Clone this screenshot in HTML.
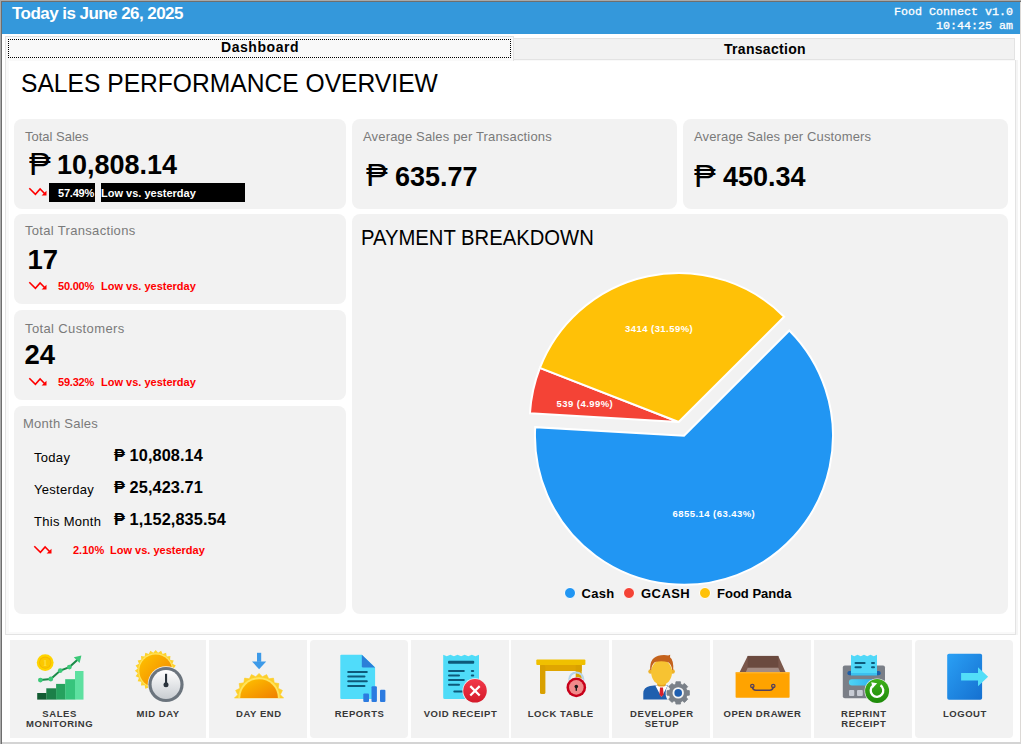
<!DOCTYPE html>
<html><head><meta charset="utf-8"><style>
html,body{margin:0;padding:0;width:1021px;height:744px;overflow:hidden;background:#fff;}
.r{position:absolute;box-sizing:border-box;}
.t{position:absolute;white-space:nowrap;line-height:1;}
</style></head><body>
<div class="r" style="left:0px;top:0px;width:1021px;height:744px;background:#ffffff;"></div>
<div class="r" style="left:0;top:0;width:1021px;height:1px;background:#a9a9a9"></div>
<div class="r" style="left:0;top:0;width:1px;height:744px;background:#a9a9a9"></div>
<div class="r" style="left:1px;top:1px;width:1020px;height:1px;background:#6e6e6e"></div>
<div class="r" style="left:1px;top:1px;width:1px;height:743px;background:#6e6e6e"></div>
<div class="r" style="left:1020px;top:2px;width:1px;height:742px;background:#dcd9d6;"></div>
<div class="r" style="left:2px;top:742px;width:1019px;height:2px;background:#d4d4d4;"></div>
<div class="r" style="left:2px;top:2px;width:1018px;height:32px;background:#3498db;"></div>
<div class="t" style="left:12px;top:4.55px;font-size:17px;font-weight:bold;color:#fff;font-family:'Liberation Sans', sans-serif;letter-spacing:-0.55px;">Today is June 26, 2025</div>
<div class="t" style="left:894px;top:7.13px;font-size:11.67px;font-weight:normal;color:#fff;font-family:'Liberation Mono', monospace;letter-spacing:0px;-webkit-text-stroke:0.3px #fff;">Food Connect v1.0</div>
<div class="t" style="left:936px;top:21.43px;font-size:11.67px;font-weight:normal;color:#fff;font-family:'Liberation Mono', monospace;letter-spacing:0px;-webkit-text-stroke:0.3px #fff;">10:44:25 am</div>
<div class="r" style="left:5px;top:60px;width:1011px;height:575px;background:#e3e3e3;"></div>
<div class="r" style="left:6px;top:60px;width:1009px;height:574px;background:#f9f9f9;"></div>
<div class="r" style="left:9px;top:61px;width:1006px;height:571px;background:#ffffff;"></div>
<div class="r" style="left:1016px;top:60px;width:2px;height:575px;background:#f5f5f5;"></div>
<div class="r" style="left:513px;top:38px;width:502px;height:22px;background:#e3e3e3;"></div>
<div class="r" style="left:514px;top:39px;width:500px;height:20px;background:#f2f2f2;"></div>
<div class="r" style="left:514px;top:60px;width:501px;height:1px;background:#f9f9f9;"></div>
<div class="r" style="left:5px;top:36px;width:509px;height:25px;background:#e3e3e3;"></div>
<div class="r" style="left:6px;top:37px;width:507px;height:24px;background:#f9f9f9;"></div>
<div class="r" style="left:8px;top:39px;width:503px;height:19px;border:1px dotted #000;"></div>
<div class="t" style="left:221px;top:39.80px;font-size:14px;font-weight:bold;color:#000;font-family:'Liberation Sans', sans-serif;letter-spacing:0.55px;">Dashboard</div>
<div class="t" style="left:724px;top:42.10px;font-size:14px;font-weight:bold;color:#000;font-family:'Liberation Sans', sans-serif;letter-spacing:0.3px;">Transaction</div>
<div class="t" style="left:21px;top:69.97px;font-size:26.5px;font-weight:normal;color:#000;font-family:'Liberation Sans', sans-serif;letter-spacing:0px;transform:scaleX(0.929);transform-origin:0 0;">SALES PERFORMANCE OVERVIEW</div>
<div class="r" style="left:14px;top:119px;width:332px;height:90px;background:#f2f2f2;border-radius:8px"></div>
<div class="r" style="left:14px;top:214px;width:332px;height:90px;background:#f2f2f2;border-radius:8px"></div>
<div class="r" style="left:14px;top:310px;width:332px;height:90px;background:#f2f2f2;border-radius:8px"></div>
<div class="r" style="left:14px;top:406px;width:332px;height:208px;background:#f2f2f2;border-radius:8px"></div>
<div class="r" style="left:352px;top:119px;width:325px;height:90px;background:#f2f2f2;border-radius:8px"></div>
<div class="r" style="left:683px;top:119px;width:325px;height:90px;background:#f2f2f2;border-radius:8px"></div>
<div class="r" style="left:352px;top:214px;width:656px;height:400px;background:#f2f2f2;border-radius:8px"></div>
<div class="t" style="left:25px;top:129.95px;font-size:13px;font-weight:normal;color:#7a7a7a;font-family:'Liberation Sans', sans-serif;letter-spacing:0px;">Total Sales</div>
<div class="t" style="left:28.5px;top:149.15px;font-size:31px;font-weight:normal;color:#000;font-family:'Liberation Sans', sans-serif;letter-spacing:0px;transform:scaleX(1.05);transform-origin:0 0;">&#8369;</div>
<div class="t" style="left:57px;top:151.55px;font-size:27px;font-weight:bold;color:#000;font-family:'Liberation Sans', sans-serif;letter-spacing:0px;">10,808.14</div>
<svg class="r" style="left:27px;top:186px" width="22" height="12" viewBox="0 0 22 12"><polyline points="2.3,2.3 8.4,8.4 13.1,3 18.3,8.2" fill="none" stroke="#ff0000" stroke-width="1.6"/><polygon points="19.5,9.5 19.5,4.8 14.6,9.5" fill="#ff0000"/></svg>
<div class="r" style="left:49px;top:183px;width:46px;height:19px;background:#000;"></div>
<div class="r" style="left:101px;top:183px;width:144px;height:19px;background:#000;"></div>
<div class="t" style="left:58px;top:187.65px;font-size:11px;font-weight:bold;color:#fff;font-family:'Liberation Sans', sans-serif;letter-spacing:-0.2px;">57.49%</div>
<div class="t" style="left:101px;top:187.65px;font-size:11px;font-weight:bold;color:#fff;font-family:'Liberation Sans', sans-serif;letter-spacing:0px;">Low vs. yesterday</div>
<div class="t" style="left:25px;top:223.95px;font-size:13px;font-weight:normal;color:#7a7a7a;font-family:'Liberation Sans', sans-serif;letter-spacing:0.32px;">Total Transactions</div>
<div class="t" style="left:27.5px;top:245.62px;font-size:27.5px;font-weight:bold;color:#000;font-family:'Liberation Sans', sans-serif;letter-spacing:0px;">17</div>
<svg class="r" style="left:27px;top:280px" width="22" height="12" viewBox="0 0 22 12"><polyline points="2.3,2.3 8.4,8.4 13.1,3 18.3,8.2" fill="none" stroke="#ff0000" stroke-width="1.6"/><polygon points="19.5,9.5 19.5,4.8 14.6,9.5" fill="#ff0000"/></svg>
<div class="t" style="left:58px;top:280.65px;font-size:11px;font-weight:bold;color:#ff0000;font-family:'Liberation Sans', sans-serif;letter-spacing:-0.2px;">50.00%</div>
<div class="t" style="left:101px;top:280.65px;font-size:11px;font-weight:bold;color:#ff0000;font-family:'Liberation Sans', sans-serif;letter-spacing:0px;">Low vs. yesterday</div>
<div class="t" style="left:25px;top:321.95px;font-size:13px;font-weight:normal;color:#7a7a7a;font-family:'Liberation Sans', sans-serif;letter-spacing:0.38px;">Total Customers</div>
<div class="t" style="left:24.5px;top:340.62px;font-size:27.5px;font-weight:bold;color:#000;font-family:'Liberation Sans', sans-serif;letter-spacing:0px;">24</div>
<svg class="r" style="left:27px;top:376px" width="22" height="12" viewBox="0 0 22 12"><polyline points="2.3,2.3 8.4,8.4 13.1,3 18.3,8.2" fill="none" stroke="#ff0000" stroke-width="1.6"/><polygon points="19.5,9.5 19.5,4.8 14.6,9.5" fill="#ff0000"/></svg>
<div class="t" style="left:58px;top:376.65px;font-size:11px;font-weight:bold;color:#ff0000;font-family:'Liberation Sans', sans-serif;letter-spacing:-0.2px;">59.32%</div>
<div class="t" style="left:101px;top:376.65px;font-size:11px;font-weight:bold;color:#ff0000;font-family:'Liberation Sans', sans-serif;letter-spacing:0px;">Low vs. yesterday</div>
<div class="t" style="left:23px;top:416.95px;font-size:13px;font-weight:normal;color:#7a7a7a;font-family:'Liberation Sans', sans-serif;letter-spacing:0.25px;">Month Sales</div>
<div class="t" style="left:34px;top:451.15px;font-size:13px;font-weight:normal;color:#000;font-family:'Liberation Sans', sans-serif;letter-spacing:0.3px;">Today</div>
<div class="t" style="left:34px;top:482.95px;font-size:13px;font-weight:normal;color:#000;font-family:'Liberation Sans', sans-serif;letter-spacing:0.3px;">Yesterday</div>
<div class="t" style="left:34px;top:514.75px;font-size:13px;font-weight:normal;color:#000;font-family:'Liberation Sans', sans-serif;letter-spacing:0.3px;">This Month</div>
<div class="t" style="left:114px;top:446.64px;font-size:16.3px;font-weight:bold;color:#000;font-family:'Liberation Sans', sans-serif;letter-spacing:0.1px;">&#8369; 10,808.14</div>
<div class="t" style="left:114px;top:479.25px;font-size:16.3px;font-weight:bold;color:#000;font-family:'Liberation Sans', sans-serif;letter-spacing:0.1px;">&#8369; 25,423.71</div>
<div class="t" style="left:114px;top:511.14px;font-size:16.3px;font-weight:bold;color:#000;font-family:'Liberation Sans', sans-serif;letter-spacing:0.1px;">&#8369; 1,152,835.54</div>
<svg class="r" style="left:32px;top:544px" width="22" height="12" viewBox="0 0 22 12"><polyline points="2.3,2.3 8.4,8.4 13.1,3 18.3,8.2" fill="none" stroke="#ff0000" stroke-width="1.6"/><polygon points="19.5,9.5 19.5,4.8 14.6,9.5" fill="#ff0000"/></svg>
<div class="t" style="left:73px;top:545.35px;font-size:11px;font-weight:bold;color:#ff0000;font-family:'Liberation Sans', sans-serif;letter-spacing:0px;">2.10%</div>
<div class="t" style="left:110px;top:545.15px;font-size:11px;font-weight:bold;color:#ff0000;font-family:'Liberation Sans', sans-serif;letter-spacing:0px;">Low vs. yesterday</div>
<div class="t" style="left:363px;top:129.95px;font-size:13px;font-weight:normal;color:#7a7a7a;font-family:'Liberation Sans', sans-serif;letter-spacing:0.16px;">Average Sales per Transactions</div>
<div class="t" style="left:366px;top:160.15px;font-size:31px;font-weight:normal;color:#000;font-family:'Liberation Sans', sans-serif;letter-spacing:0px;transform:scaleX(1.05);transform-origin:0 0;">&#8369;</div>
<div class="t" style="left:395px;top:163.55px;font-size:27px;font-weight:bold;color:#000;font-family:'Liberation Sans', sans-serif;letter-spacing:0px;">635.77</div>
<div class="t" style="left:694px;top:129.95px;font-size:13px;font-weight:normal;color:#7a7a7a;font-family:'Liberation Sans', sans-serif;letter-spacing:0.15px;">Average Sales per Customers</div>
<div class="t" style="left:694px;top:160.95px;font-size:31px;font-weight:normal;color:#000;font-family:'Liberation Sans', sans-serif;letter-spacing:0px;transform:scaleX(1.05);transform-origin:0 0;">&#8369;</div>
<div class="t" style="left:723px;top:164.35px;font-size:27px;font-weight:bold;color:#000;font-family:'Liberation Sans', sans-serif;letter-spacing:0px;">450.34</div>
<div class="t" style="left:361px;top:226.50px;font-size:22px;font-weight:normal;color:#000;font-family:'Liberation Sans', sans-serif;letter-spacing:0px;transform:scaleX(0.92);transform-origin:0 0;">PAYMENT BREAKDOWN</div>
<svg class="r" style="left:0;top:0" width="1021" height="744"><path d="M683.96,435.83 L789.32,330.47 A149.0,149.0 0 1 1 535.22,427.13 Z" fill="#2196f3" stroke="#fff" stroke-width="2" stroke-linejoin="miter"/><path d="M678.70,422.00 L529.95,413.30 A149.0,149.0 0 0 1 539.89,367.85 Z" fill="#f44336" stroke="#fff" stroke-width="2" stroke-linejoin="miter"/><path d="M678.70,422.00 L539.89,367.85 A149.0,149.0 0 0 1 784.13,316.71 Z" fill="#ffc107" stroke="#fff" stroke-width="2" stroke-linejoin="miter"/></svg>
<div class="t" style="left:625px;top:324.43px;font-size:9.5px;font-weight:bold;color:#fff;font-family:'Liberation Sans', sans-serif;letter-spacing:0.45px;">3414 (31.59%)</div>
<div class="t" style="left:556.5px;top:398.53px;font-size:9.5px;font-weight:bold;color:#fff;font-family:'Liberation Sans', sans-serif;letter-spacing:0.45px;">539 (4.99%)</div>
<div class="t" style="left:672.5px;top:508.93px;font-size:9.5px;font-weight:bold;color:#fff;font-family:'Liberation Sans', sans-serif;letter-spacing:0.45px;">6855.14 (63.43%)</div>
<div class="r" style="left:564px;top:587.4px;width:12px;height:12px;border-radius:50%;background:#2196f3;border:1px solid #fff"></div>
<div class="t" style="left:581.5px;top:586.95px;font-size:13px;font-weight:bold;color:#000;font-family:'Liberation Sans', sans-serif;letter-spacing:0.3px;">Cash</div>
<div class="r" style="left:623.3px;top:587.4px;width:12px;height:12px;border-radius:50%;background:#f44336;border:1px solid #fff"></div>
<div class="t" style="left:641px;top:586.95px;font-size:13px;font-weight:bold;color:#000;font-family:'Liberation Sans', sans-serif;letter-spacing:0.45px;">GCASH</div>
<div class="r" style="left:699px;top:587.4px;width:12px;height:12px;border-radius:50%;background:#ffc107;border:1px solid #fff"></div>
<div class="t" style="left:717px;top:586.95px;font-size:13px;font-weight:bold;color:#000;font-family:'Liberation Sans', sans-serif;letter-spacing:0px;">Food Panda</div>
<div class="r" style="left:10px;top:640px;width:196px;height:98px;background:#f2f2f2;"></div>
<div class="r" style="left:209px;top:640px;width:98px;height:98px;background:#f2f2f2;"></div>
<div class="r" style="left:310px;top:640px;width:98px;height:98px;background:#f2f2f2;border-radius:4px"></div>
<div class="r" style="left:411px;top:640px;width:98px;height:98px;background:#f2f2f2;"></div>
<div class="r" style="left:511px;top:640px;width:98px;height:98px;background:#f2f2f2;"></div>
<div class="r" style="left:612px;top:640px;width:98px;height:98px;background:#f2f2f2;"></div>
<div class="r" style="left:713px;top:640px;width:98px;height:98px;background:#f2f2f2;"></div>
<div class="r" style="left:814px;top:640px;width:98px;height:98px;background:#f2f2f2;"></div>
<div class="r" style="left:915px;top:640px;width:98px;height:98px;background:#f2f2f2;border-radius:4px"></div>
<div class="t" style="left:-0.43px;width:120px;text-align:center;top:709.42px;font-size:9.5px;font-weight:bold;color:#383838;font-family:'Liberation Sans', sans-serif;letter-spacing:0.55px">SALES</div>
<div class="t" style="left:-0.43px;width:120px;text-align:center;top:719.12px;font-size:9.5px;font-weight:bold;color:#383838;font-family:'Liberation Sans', sans-serif;letter-spacing:0.55px">MONITORING</div>
<div class="t" style="left:98.08px;width:120px;text-align:center;top:709.42px;font-size:9.5px;font-weight:bold;color:#383838;font-family:'Liberation Sans', sans-serif;letter-spacing:0.55px">MID DAY</div>
<div class="t" style="left:198.88px;width:120px;text-align:center;top:709.42px;font-size:9.5px;font-weight:bold;color:#383838;font-family:'Liberation Sans', sans-serif;letter-spacing:0.55px">DAY END</div>
<div class="t" style="left:299.57px;width:120px;text-align:center;top:709.42px;font-size:9.5px;font-weight:bold;color:#383838;font-family:'Liberation Sans', sans-serif;letter-spacing:0.55px">REPORTS</div>
<div class="t" style="left:400.47px;width:120px;text-align:center;top:709.42px;font-size:9.5px;font-weight:bold;color:#383838;font-family:'Liberation Sans', sans-serif;letter-spacing:0.55px">VOID RECEIPT</div>
<div class="t" style="left:500.77px;width:120px;text-align:center;top:709.42px;font-size:9.5px;font-weight:bold;color:#383838;font-family:'Liberation Sans', sans-serif;letter-spacing:0.55px">LOCK TABLE</div>
<div class="t" style="left:601.88px;width:120px;text-align:center;top:709.42px;font-size:9.5px;font-weight:bold;color:#383838;font-family:'Liberation Sans', sans-serif;letter-spacing:0.55px">DEVELOPER</div>
<div class="t" style="left:601.88px;width:120px;text-align:center;top:719.12px;font-size:9.5px;font-weight:bold;color:#383838;font-family:'Liberation Sans', sans-serif;letter-spacing:0.55px">SETUP</div>
<div class="t" style="left:702.48px;width:120px;text-align:center;top:709.42px;font-size:9.5px;font-weight:bold;color:#383838;font-family:'Liberation Sans', sans-serif;letter-spacing:0.55px">OPEN DRAWER</div>
<div class="t" style="left:803.77px;width:120px;text-align:center;top:709.42px;font-size:9.5px;font-weight:bold;color:#383838;font-family:'Liberation Sans', sans-serif;letter-spacing:0.55px">REPRINT</div>
<div class="t" style="left:803.77px;width:120px;text-align:center;top:719.12px;font-size:9.5px;font-weight:bold;color:#383838;font-family:'Liberation Sans', sans-serif;letter-spacing:0.55px">RECEIPT</div>
<div class="t" style="left:904.88px;width:120px;text-align:center;top:709.42px;font-size:9.5px;font-weight:bold;color:#383838;font-family:'Liberation Sans', sans-serif;letter-spacing:0.55px">LOGOUT</div>
<svg class="r" style="left:0;top:0" width="1021" height="744"><defs>
<linearGradient id="sunG" x1="0" y1="0" x2="1" y2="1"><stop offset="0" stop-color="#ffc400"/><stop offset="1" stop-color="#f08000"/></linearGradient>
<linearGradient id="faceG" x1="0" y1="0" x2="0" y2="1"><stop offset="0" stop-color="#ffffff"/><stop offset="1" stop-color="#c9cdd2"/></linearGradient>
<linearGradient id="redG" x1="0" y1="0" x2="0" y2="1"><stop offset="0" stop-color="#f2394a"/><stop offset="1" stop-color="#d41a2a"/></linearGradient>
<linearGradient id="greenG" x1="0" y1="0" x2="0" y2="1"><stop offset="0" stop-color="#3fb01a"/><stop offset="1" stop-color="#1e8a0a"/></linearGradient>
<linearGradient id="doorG" x1="0" y1="0" x2="1" y2="1"><stop offset="0" stop-color="#2aa0f5"/><stop offset="1" stop-color="#1570d0"/></linearGradient>
<linearGradient id="dispG" x1="0" y1="0" x2="1" y2="0"><stop offset="0" stop-color="#4fd4f5"/><stop offset="1" stop-color="#2ab0ee"/></linearGradient>
</defs>
<rect x="37.20" y="693.0" width="9.30" height="6.60" fill="#135c33"/>
<rect x="46.30" y="688.3" width="10.00" height="11.30" fill="#1c8048"/>
<rect x="56.10" y="683.9" width="9.30" height="15.70" fill="#26a25e"/>
<rect x="65.20" y="679.2" width="10.00" height="20.40" fill="#37c47c"/>
<rect x="75.00" y="671.0" width="8.50" height="28.60" fill="#5ee0a0"/>
<polyline points="40.4,680.1 50.8,679 60.3,670.6 69.4,667.1 77.5,659.8" fill="none" stroke="#1b8a48" stroke-width="2"/>
<circle cx="40.4" cy="680.1" r="2.4" fill="#3cc878"/>
<circle cx="50.8" cy="679" r="2.4" fill="#3cc878"/>
<circle cx="60.3" cy="670.6" r="2.4" fill="#3cc878"/>
<circle cx="69.4" cy="667.1" r="2.4" fill="#3cc878"/>
<polygon points="81.4,655.6 73.8,657.3 79.6,663.1" fill="#3cc878"/>
<circle cx="45.2" cy="662.6" r="8.4" fill="#ffd400"/>
<circle cx="45.2" cy="662.6" r="6.2" fill="#f5b800"/>
<circle cx="45.2" cy="662.6" r="5.2" fill="#fcc800"/>
<text x="45.2" y="665.8" font-family="Liberation Serif" font-weight="bold" font-size="8.5" fill="#ffe040" text-anchor="middle">1</text>
<polygon points="176.50,670.80 173.65,673.16 175.79,676.18 172.42,677.73 173.71,681.20 170.06,681.82 170.41,685.51 166.72,685.16 166.10,688.81 162.63,687.52 161.08,690.89 158.06,688.75 155.70,691.60 153.34,688.75 150.32,690.89 148.77,687.52 145.30,688.81 144.68,685.16 140.99,685.51 141.34,681.82 137.69,681.20 138.98,677.73 135.61,676.18 137.75,673.16 134.90,670.80 137.75,668.44 135.61,665.42 138.98,663.87 137.69,660.40 141.34,659.78 140.99,656.09 144.68,656.44 145.30,652.79 148.77,654.08 150.32,650.71 153.34,652.85 155.70,650.00 158.06,652.85 161.08,650.71 162.63,654.08 166.10,652.79 166.72,656.44 170.41,656.09 170.06,659.78 173.71,660.40 172.42,663.87 175.79,665.42 173.65,668.44" fill="#fdd22e"/>
<circle cx="155.7" cy="670.8" r="17.6" fill="#ffe45c"/>
<circle cx="155.7" cy="670.8" r="16.4" fill="url(#sunG)"/>
<circle cx="166" cy="684.5" r="18.3" fill="#f2f2f2"/>
<circle cx="166" cy="684.5" r="17.6" fill="#6b747d"/>
<circle cx="166" cy="684.5" r="14.4" fill="url(#faceG)"/>
<rect x="165" y="673.8" width="2.1" height="10.5" fill="#2a333c"/>
<circle cx="166" cy="684.7" r="2.5" fill="#2a333c"/>
<rect x="257" y="652.8" width="4.2" height="9" fill="#3d9ae8"/>
<polygon points="252,661.4 266.2,661.4 259.1,669.3" fill="#3d9ae8"/>
<polygon points="234.45,698.00 237.81,694.64 235.65,690.40 239.89,688.24 239.15,683.54 243.85,682.80 244.59,678.10 249.29,678.84 251.45,674.60 255.69,676.76 259.05,673.40 262.41,676.76 266.65,674.60 268.81,678.84 273.51,678.10 274.25,682.80 278.95,683.54 278.21,688.24 282.45,690.40 280.29,694.64 283.65,698.00" fill="#fdcf2a" stroke="#fdcf2a" stroke-width="0.6" stroke-linejoin="round"/>
<path d="M238.3,698 A20.75,20.75 0 0 1 279.8,698 Z" fill="#ffe45c"/>
<path d="M240.2,698 A18.85,18.85 0 0 1 277.9,698 Z" fill="url(#sunG)"/>
<path d="M341.3,654.7 L361.8,654.7 L375.1,667.4 L375.1,697.9 Q375.1,698.9 374.1,698.9 L341.3,698.9 Q340.3,698.9 340.3,697.9 L340.3,655.7 Q340.3,654.7 341.3,654.7 Z" fill="#50dcfa"/>
<path d="M361.8,654.7 L375.1,667.4 L363,667.4 Q361.8,667.4 361.8,666.2 Z" fill="#2b7fd8"/>
<rect x="347.2" y="670.9" width="20.6" height="2" rx="1" fill="#0d5a7a"/>
<rect x="347.2" y="675.6" width="18.3" height="2" rx="1" fill="#0d5a7a"/>
<rect x="347.2" y="680.3" width="20.6" height="2" rx="1" fill="#0d5a7a"/>
<rect x="347.2" y="685.0" width="18.3" height="2" rx="1" fill="#0d5a7a"/>
<rect x="363.3" y="693.4" width="5.7" height="8.5" rx="1" fill="#2c7be0"/>
<rect x="371.5" y="686.2" width="5.4" height="15.7" rx="1" fill="#2c7be0"/>
<rect x="380" y="689.8" width="5.4" height="12.1" rx="1" fill="#2c7be0"/>
<path d="M444.7,698.9 Q443.2,698.9 443.2,697.4 L443.2,654.7 L443.20,654.7 L446.78,656.2 L450.36,654.7 L453.94,656.2 L457.52,654.7 L461.10,656.2 L464.68,654.7 L468.26,656.2 L471.84,654.7 L475.42,656.2 L479.00,654.7 L479,697.4 Q479,698.9 477.5,698.9 Z" fill="#4fdcf8"/>
<rect x="448" y="660.8" width="26.2" height="3" rx="1" fill="#0d5a7a"/>
<rect x="448" y="670" width="16.8" height="2" rx="1" fill="#0d5a7a"/>
<rect x="448" y="674.5" width="12.0" height="2" rx="1" fill="#0d5a7a"/>
<rect x="448" y="679" width="16.8" height="2" rx="1" fill="#0d5a7a"/>
<rect x="448" y="683.7" width="12.0" height="2" rx="1" fill="#0d5a7a"/>
<rect x="470.8" y="670" width="3.4" height="2" rx="1" fill="#0d5a7a"/>
<rect x="470.8" y="674.5" width="3.4" height="2" rx="1" fill="#0d5a7a"/>
<rect x="453.3" y="690.6" width="11.7" height="2" rx="1" fill="#0d5a7a"/>
<circle cx="475" cy="690.8" r="12.6" fill="#f2f2f2"/>
<circle cx="475" cy="690.8" r="11.8" fill="url(#redG)"/>
<path d="M470.3,686.1 L479.7,695.5 M479.7,686.1 L470.3,695.5" stroke="#fff" stroke-width="2.2"/>
<rect x="540" y="665" width="41.7" height="6" fill="#e0a500"/>
<rect x="540" y="665" width="5.4" height="29" rx="1.5" fill="#d9a000"/>
<rect x="575.7" y="665" width="6" height="16" fill="#d9a000"/>
<rect x="536.3" y="659.5" width="49.1" height="5.5" rx="1" fill="#f0c000"/>
<circle cx="576.3" cy="679.5" r="7" fill="none" stroke="#b7d4ea" stroke-width="2.2"/>
<circle cx="576.3" cy="687.4" r="10.5" fill="#f2f2f2"/>
<circle cx="576.3" cy="687.4" r="9.8" fill="#c8001a"/>
<circle cx="576.3" cy="687.4" r="7.3" fill="#f08a8a"/>
<circle cx="576.3" cy="686.6" r="1.8" fill="#1a1a1a"/>
<rect x="575.6" y="686.6" width="1.4" height="4.2" fill="#1a1a1a"/>
<path d="M643.3,699.6 L643.3,693.5 Q643.3,687.2 650,686 L656,685.2 L661.5,686.5 L667,685.2 L673,686 Q679,687.2 679,693.5 L679,699.6 Z" fill="#1f5fae"/>
<path d="M655.3,685.5 L661.5,697.2 L667.7,685.5 Z" fill="#ffffff"/>
<polygon points="660,687.5 663,687.5 663.6,694.5 661.5,697 659.4,694.5" fill="#d8202a"/>
<rect x="657.2" y="679" width="8.6" height="7.5" rx="2" fill="#e4a01c"/>
<circle cx="650.6" cy="671.5" r="2.3" fill="#eeb22a"/>
<circle cx="672.6" cy="671.5" r="2.3" fill="#eeb22a"/>
<ellipse cx="661.6" cy="672.3" rx="10.4" ry="12.6" fill="#f7c332"/>
<path d="M650.2,670 Q649.3,656.5 661,655.2 Q666,654.8 668.2,655.6 L670.2,654.7 L670,657.2 Q673.8,660 673.2,670 L672.2,670 Q671.6,664.5 668.2,662.2 Q661.6,660.4 655,662 Q651.6,664.4 651.2,670 Z" fill="#c4621c"/>
<circle cx="678.2" cy="692.9" r="12.6" fill="#f2f2f2"/>
<polygon points="675.60,684.49 675.94,681.73 680.46,681.73 680.80,684.49 682.31,685.12 684.50,683.40 687.70,686.60 685.98,688.79 686.61,690.30 689.37,690.64 689.37,695.16 686.61,695.50 685.98,697.01 687.70,699.20 684.50,702.40 682.31,700.68 680.80,701.31 680.46,704.07 675.94,704.07 675.60,701.31 674.09,700.68 671.90,702.40 668.70,699.20 670.42,697.01 669.79,695.50 667.03,695.16 667.03,690.64 669.79,690.30 670.42,688.79 668.70,686.60 671.90,683.40 674.09,685.12" fill="#7a8088" stroke="#7a8088" stroke-width="0.8" stroke-linejoin="round"/>
<circle cx="678.2" cy="692.9" r="9.2" fill="#7a8088"/>
<circle cx="678.2" cy="692.9" r="5.7" fill="#f4f4f4"/>
<circle cx="678.2" cy="692.9" r="3.8" fill="#1f5fb0"/>
<polygon points="747.7,655.9 778.3,655.9 785.6,672.2 739.6,672.2" fill="#7a574b"/>
<rect x="747.7" y="655.9" width="30.6" height="11.8" fill="#6b4a3f"/>
<polygon points="747.7,667.7 778.3,667.7 780.2,672.2 745.8,672.2" fill="#a48c84"/>
<rect x="735.6" y="672.2" width="54" height="25.5" rx="0.8" fill="#ffa300"/>
<rect x="735.6" y="672.2" width="54" height="1.2" fill="#ffb52e"/>
<path d="M752.3,686.6 Q752.8,690.3 756,690.3 L769.6,690.3 Q772.8,690.3 773.3,686.6" fill="none" stroke="#55405a" stroke-width="1.6"/>
<circle cx="752.3" cy="686" r="1.7" fill="none" stroke="#55405a" stroke-width="1.3"/>
<circle cx="773.3" cy="686" r="1.7" fill="none" stroke="#55405a" stroke-width="1.3"/>
<rect x="842.8" y="665.6" width="42.2" height="32.7" rx="2" fill="#7b7f87"/>
<rect x="847.4" y="671" width="33.3" height="4.3" rx="2.1" fill="#1d5ea8"/>
<path d="M851,675.3 L851,654.7 L851.00,654.7 L854.25,656.2 L857.50,654.7 L860.75,656.2 L864.00,654.7 L867.25,656.2 L870.50,654.7 L873.75,656.2 L877.00,654.7 L877,675.3 Z" fill="#50d8f8"/>
<rect x="851" y="673" width="26" height="2.3" fill="#3cc0ee"/>
<rect x="854.5" y="662" width="11.1" height="2" rx="1" fill="#0d5a7a"/>
<rect x="854.5" y="666.3" width="7.3" height="2" rx="1" fill="#0d5a7a"/>
<rect x="871" y="662" width="4.0" height="2" rx="1" fill="#0d5a7a"/>
<rect x="871" y="666.3" width="4.0" height="2" rx="1" fill="#0d5a7a"/>
<rect x="848.9" y="679.3" width="26.4" height="6.3" rx="3" fill="url(#dispG)"/>
<rect x="849" y="690" width="5.3" height="6" rx="1" fill="#c8ccd4"/>
<rect x="857" y="690" width="5.8" height="6" rx="1" fill="#c8ccd4"/>
<circle cx="877.1" cy="691" r="12.6" fill="#f2f2f2"/>
<circle cx="877.1" cy="691" r="12" fill="url(#greenG)"/>
<path d="M873.2,685.5 A6.3,6.3 0 1 0 880.5,685.3" fill="none" stroke="#fff" stroke-width="2.3"/>
<polygon points="871.2,682.2 877.2,683.2 872.8,688" fill="#fff"/>
<rect x="947.2" y="653.7" width="34.9" height="46" rx="1.8" fill="url(#doorG)"/>
<polygon points="961.1,673.1 978,673.1 978,667.3 988.1,676.8 978,686.2 978,680.6 961.1,680.6" fill="#52def8"/></svg>
</body></html>
